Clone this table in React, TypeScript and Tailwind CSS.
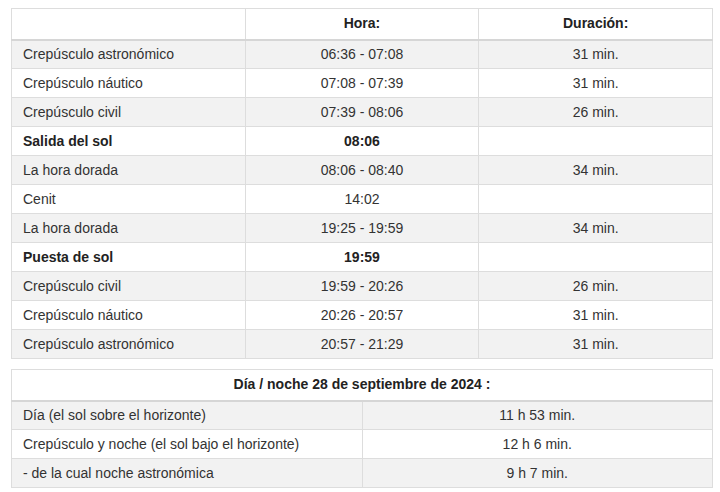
import React from 'react';

type Row = { name: string; time: string; dur: string; bold?: boolean };

const sunRows: Row[] = [
  { name: 'Crepúsculo astronómico', time: '06:36 - 07:08', dur: '31 min.' },
  { name: 'Crepúsculo náutico', time: '07:08 - 07:39', dur: '31 min.' },
  { name: 'Crepúsculo civil', time: '07:39 - 08:06', dur: '26 min.' },
  { name: 'Salida del sol', time: '08:06', dur: '', bold: true },
  { name: 'La hora dorada', time: '08:06 - 08:40', dur: '34 min.' },
  { name: 'Cenit', time: '14:02', dur: '' },
  { name: 'La hora dorada', time: '19:25 - 19:59', dur: '34 min.' },
  { name: 'Puesta de sol', time: '19:59', dur: '', bold: true },
  { name: 'Crepúsculo civil', time: '19:59 - 20:26', dur: '26 min.' },
  { name: 'Crepúsculo náutico', time: '20:26 - 20:57', dur: '31 min.' },
  { name: 'Crepúsculo astronómico', time: '20:57 - 21:29', dur: '31 min.' },
];

const dayRows = [
  { name: 'Día (el sol sobre el horizonte)', value: '11 h 53 min.' },
  { name: 'Crepúsculo y noche (el sol bajo el horizonte)', value: '12 h 6 min.' },
  { name: '- de la cual noche astronómica', value: '9 h 7 min.' },
];

const cell = 'border border-[#dddddd] h-[29px] px-[11px] py-0 align-middle';
const head = 'border border-[#dddddd] border-b-2 border-b-[#d6d6d6] h-[31px] px-[11px] py-0 align-middle text-center font-bold text-[#222222]';

export default function App() {
  return (
    <div className="bg-white w-[720px] h-[492px] pt-[8px] pl-[11px] text-[14px] text-[#333333] font-['Liberation_Sans',Arial,sans-serif]">
      <table className="w-[702px] border-collapse table-fixed">
        <thead>
          <tr className="bg-white">
            <th className={head}></th>
            <th className={head}>Hora:</th>
            <th className={head}>Duración:</th>
          </tr>
        </thead>
        <tbody>
          {sunRows.map((r, i) => (
            <tr key={i} className={i % 2 === 0 ? 'bg-[#f2f2f2]' : 'bg-white'}>
              <td className={`${cell} text-left ${r.bold ? 'font-bold text-[#222222]' : ''}`}>{r.name}</td>
              <td className={`${cell} text-center ${r.bold ? 'font-bold text-[#222222]' : ''}`}>{r.time}</td>
              <td className={`${cell} text-center`}>{r.dur}</td>
            </tr>
          ))}
        </tbody>
      </table>

      <table className="w-[702px] border-collapse table-fixed mt-[10px]">
        <thead>
          <tr className="bg-white">
            <th colSpan={2} className={head}>
              Día / noche 28 de septiembre de 2024 :
            </th>
          </tr>
        </thead>
        <tbody>
          {dayRows.map((r, i) => (
            <tr key={i} className={i % 2 === 0 ? 'bg-[#f2f2f2]' : 'bg-white'}>
              <td className={`${cell} w-[351px] text-left`}>{r.name}</td>
              <td className={`${cell} text-center`}>{r.value}</td>
            </tr>
          ))}
        </tbody>
      </table>
    </div>
  );
}
